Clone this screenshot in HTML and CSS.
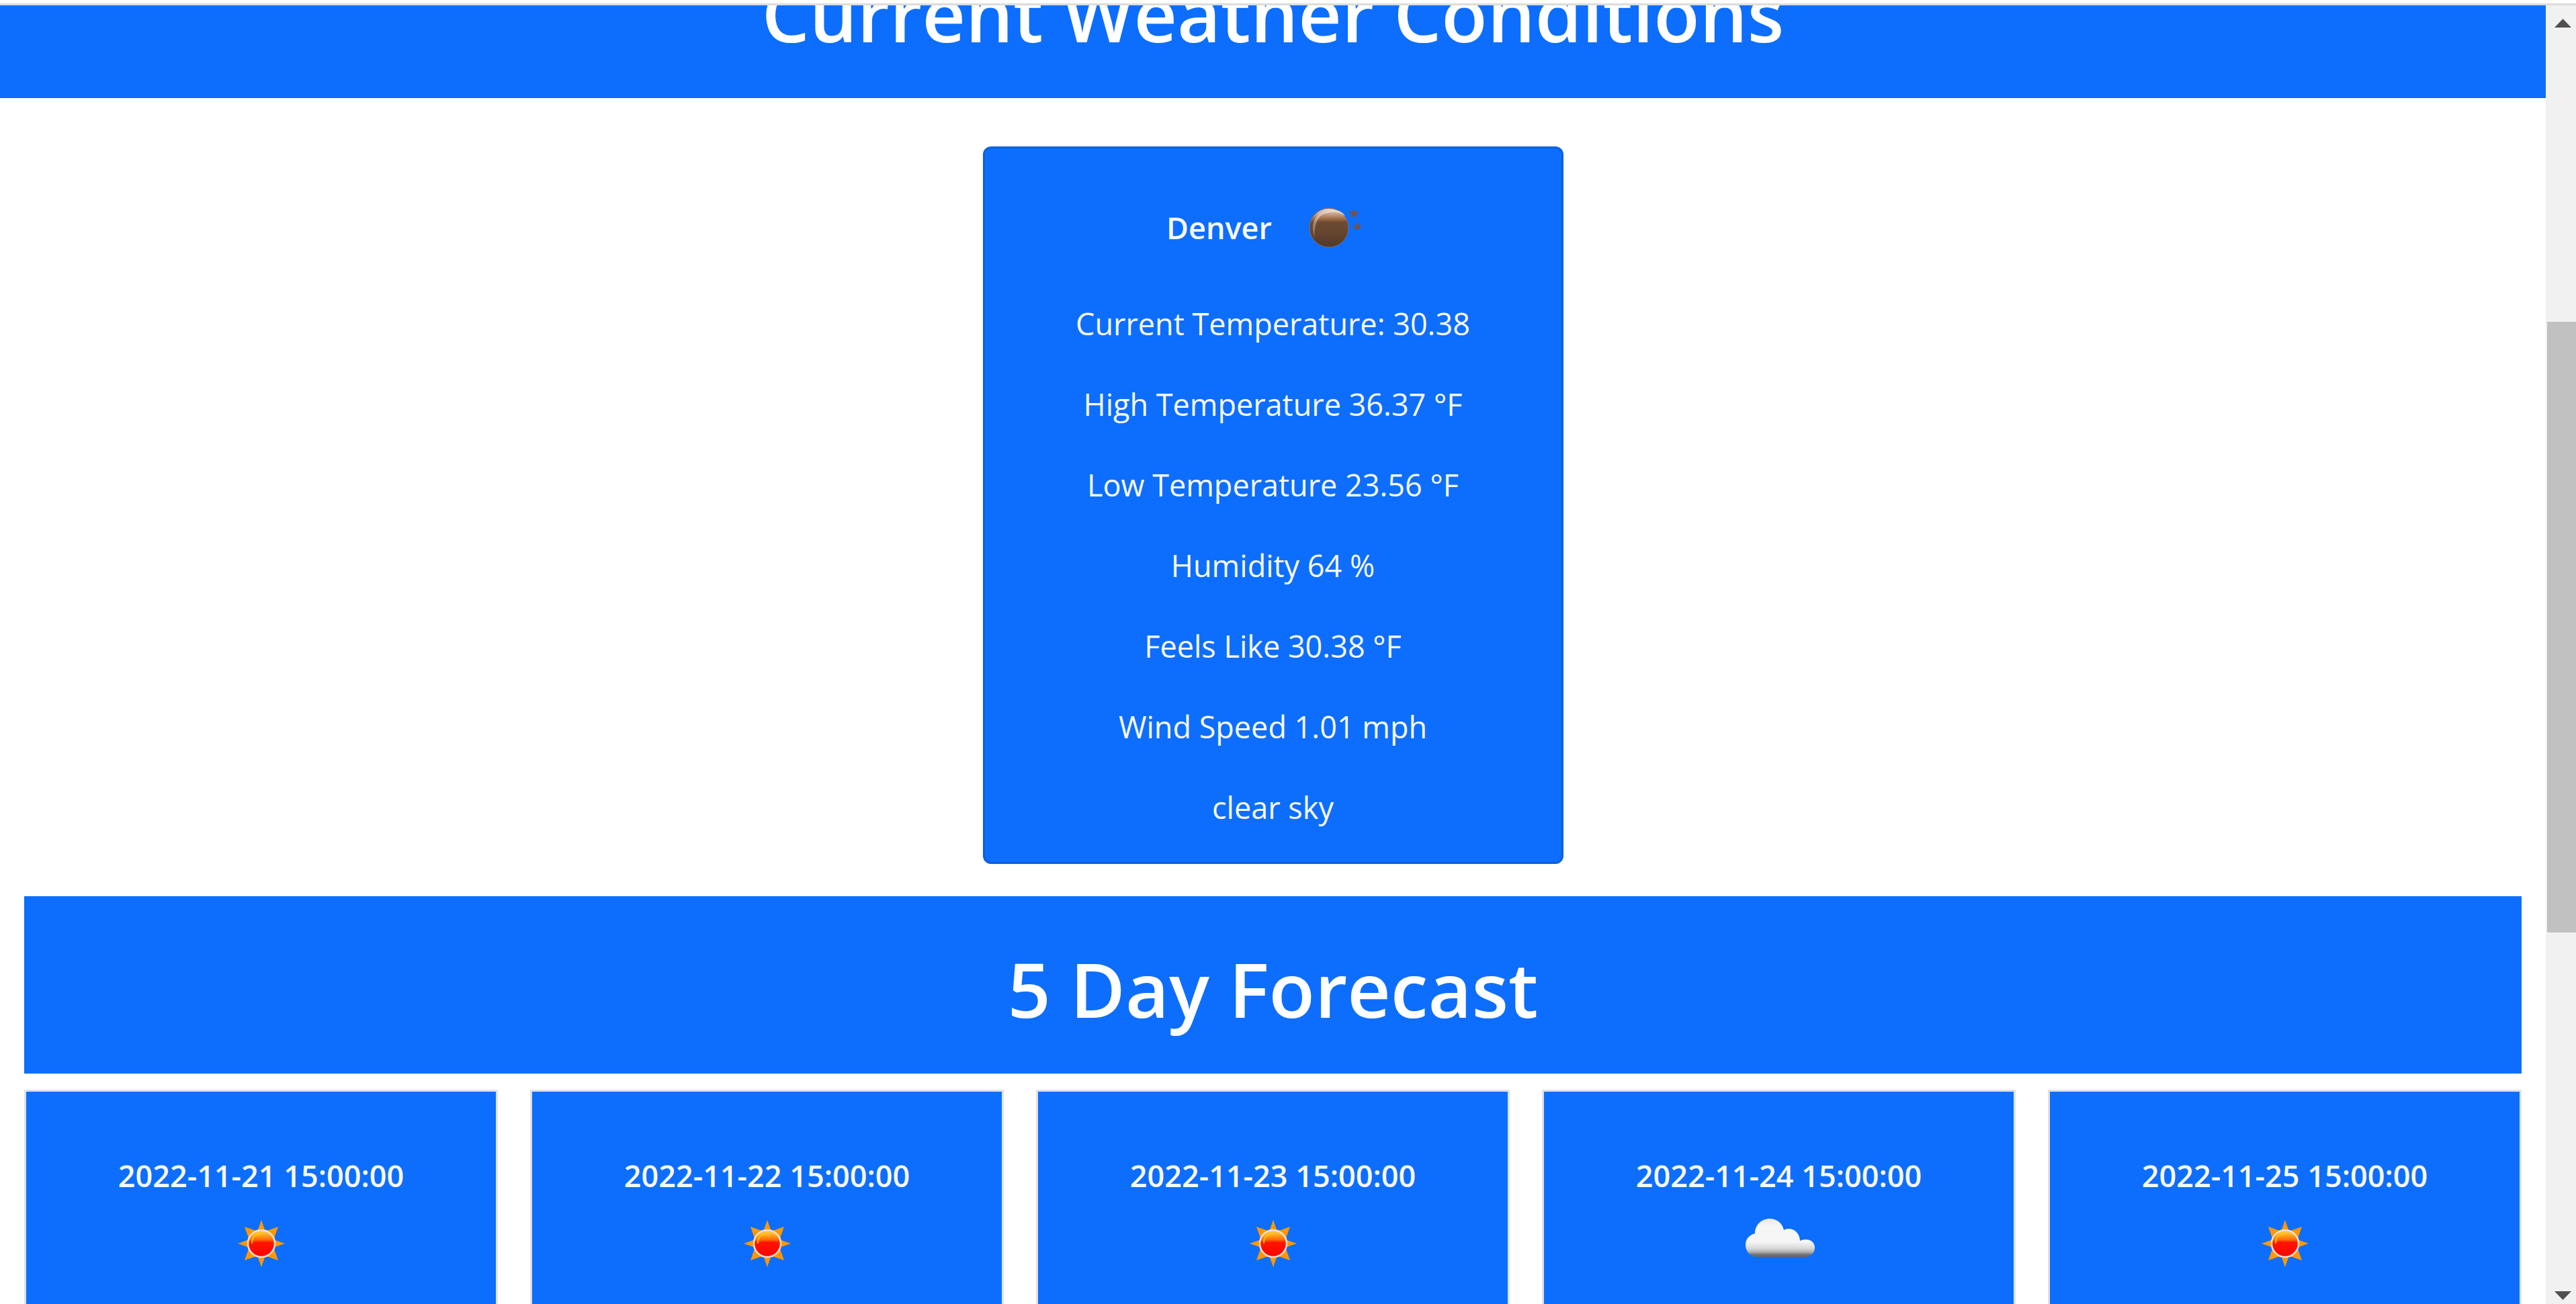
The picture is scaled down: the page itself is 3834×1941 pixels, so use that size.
FILE: index.html
```html
<!DOCTYPE html>
<html lang="en">
<head>
  <meta charset="utf-8">
  <title>Weather</title>
  <link rel="stylesheet" href="styles.css">
</head>
<body>
  <svg class="defs" aria-hidden="true">
    <defs>
      <linearGradient id="moon-fill" x1="0" y1="0" x2="0" y2="1">
        <stop offset="0" stop-color="#e8d8cf"/>
        <stop offset="0.14" stop-color="#c9a48c"/>
        <stop offset="0.27" stop-color="#a06c48"/>
        <stop offset="0.36" stop-color="#6c4a32"/>
        <stop offset="0.6" stop-color="#664630"/>
        <stop offset="1" stop-color="#503828"/>
      </linearGradient>
      <linearGradient id="moon-glow" x1="0" y1="1" x2="0.6" y2="0">
        <stop offset="0" stop-color="#e0c0a8" stop-opacity="0.3"/>
        <stop offset="1" stop-color="#f0e0d6" stop-opacity="0.7"/>
      </linearGradient>
      <linearGradient id="sun-fill" x1="0" y1="0" x2="0" y2="1">
        <stop offset="0" stop-color="#ffd860"/>
        <stop offset="0.18" stop-color="#ffa828"/>
        <stop offset="0.36" stop-color="#ff6a00"/>
        <stop offset="0.46" stop-color="#ff1400"/>
        <stop offset="1" stop-color="#ff0000"/>
      </linearGradient>
      <linearGradient id="cloud-fill" gradientUnits="userSpaceOnUse" x1="0" y1="38" x2="0" y2="95">
        <stop offset="0" stop-color="#e8e8e8"/>
        <stop offset="0.2" stop-color="#f6f6f6"/>
        <stop offset="0.6" stop-color="#f6f6f6"/>
        <stop offset="0.78" stop-color="#d8d8d8"/>
        <stop offset="0.88" stop-color="#a8a8a8"/>
        <stop offset="0.94" stop-color="#707070"/>
        <stop offset="1" stop-color="#686868"/>
      </linearGradient>
      <path id="star" d="M0-7 1.7-2.2 7-2.2 2.8.9 4.3 6 0 3-4.3 6-2.8.9-7-2.2-1.7-2.2Z"/>
      <path id="rays" d="M0-35 6-18H-6ZM0 35 6 18H-6ZM-35 0-18-6V6ZM35 0 18-6V6ZM-25-25-8-19-19-8ZM25-25 8-19 19-8ZM-25 25-8 19-19 8ZM25 25 8 19 19 8Z"/>
      <symbol id="icon-moon" viewBox="0 0 150 150">
        <circle cx="75" cy="75" r="29" fill="url(#moon-fill)" stroke="#8a6a58" stroke-width="1"/>
        <path d="M54 90C46 70 54 50 77 48 92 48 98 54 99 58 90 50 80 52 74 53 60 54 52 68 54 90Z" fill="url(#moon-glow)"/>
        <use href="#star" transform="translate(112 54) scale(1.1)" fill="#7a513c"/>
        <use href="#star" transform="translate(117 73)" fill="#7a513c"/>
      </symbol>
      <symbol id="icon-sun" viewBox="0 0 150 150">
        <use href="#rays" x="75" y="75" fill="#ff9800"/>
        <circle cx="75" cy="75" r="20" fill="url(#sun-fill)" stroke="#ffe0cc" stroke-width="2.5"/>
        <path d="M61 74C61 64 67 61 75 60" fill="none" stroke="#ffc800" stroke-opacity=".8" stroke-width="2.5" stroke-linecap="round"/>
      </symbol>
      <symbol id="icon-cloud" viewBox="0 0 150 150">
        <path d="M42 95C32 95 25 87 25 77 25 68 31 62 39 60 39 48 48 38 61 38 72 38 80 45 82 55 92 49 106 57 106 71 117 66 128 71 128 81 128 89 122 95 114 95Z" fill="url(#cloud-fill)"/>
      </symbol>
    </defs>
  </svg>

  <div class="topbar"></div>
  <div class="viewport">
    <main class="page">
      <header class="banner banner-top"><h1>Current Weather Conditions</h1></header>

      <div class="content">
        <section class="current">
          <div class="current-head">
            <h2>Denver</h2>
            <svg class="icon" role="img" aria-label="clear night"><use href="#icon-moon"/></svg>
          </div>
          <p>Current Temperature: 30.38</p>
          <p>High Temperature 36.37 °F</p>
          <p>Low Temperature 23.56 °F</p>
          <p>Humidity 64 %</p>
          <p>Feels Like 30.38 °F</p>
          <p>Wind Speed 1.01 mph</p>
          <p>clear sky</p>
        </section>

        <div class="banner"><h1>5 Day Forecast</h1></div>

        <section class="forecast">
          <article class="day"><h2>2022-11-21 15:00:00</h2><svg class="icon" role="img" aria-label="sunny"><use href="#icon-sun"/></svg></article>
          <article class="day"><h2>2022-11-22 15:00:00</h2><svg class="icon" role="img" aria-label="sunny"><use href="#icon-sun"/></svg></article>
          <article class="day"><h2>2022-11-23 15:00:00</h2><svg class="icon" role="img" aria-label="sunny"><use href="#icon-sun"/></svg></article>
          <article class="day"><h2>2022-11-24 15:00:00</h2><svg class="icon" role="img" aria-label="cloudy"><use href="#icon-cloud"/></svg></article>
          <article class="day"><h2>2022-11-25 15:00:00</h2><svg class="icon" role="img" aria-label="sunny"><use href="#icon-sun"/></svg></article>
        </section>
      </div>
    </main>

    <div class="scrollbar" aria-hidden="true">
      <svg class="arrow" viewBox="0 0 25 13"><path d="M12.5 0 25 13H0Z"/></svg>
      <div class="track"><div class="thumb"></div></div>
      <svg class="arrow" viewBox="0 0 25 13"><path d="M0 0H25L12.5 13Z"/></svg>
    </div>
  </div>
</body>
</html>
```

FILE: styles.css
```css
* {
  box-sizing: border-box;
}

body {
  margin: 0;
  height: 100vh;
  display: flex;
  flex-direction: column;
  overflow: hidden;
  background: #fff;
  color: #f8f9fa;
  font-family: "Segoe UI", "Open Sans", "Noto Sans", sans-serif;
  font-size: 45px;
  line-height: 72px;
}

h1,
h2,
p {
  margin: 0;
}

.defs {
  position: absolute;
  width: 0;
  height: 0;
}

.topbar {
  flex: none;
  height: 8px;
  border-bottom: 3px solid #dcdcdc;
}

.viewport {
  flex: 1;
  min-height: 0;
  display: flex;
}

.page {
  flex: 1;
  min-width: 0;
  overflow: hidden;
}

.banner {
  padding: 66px 48px 54px;
  background: #0d6efd;
  color: #fff;
  text-align: center;
}

/* the page is scrolled part of the way past its heading */
.banner-top {
  margin-top: -126px;
}

.banner h1 {
  font-size: 112px;
  font-weight: 600;
  line-height: 144px;
}

.content {
  display: flex;
  flex-direction: column;
  padding: 72px 36px 0;
}

.current {
  align-self: center;
  width: 864px;
  margin-bottom: 48px;
  padding: 43px 48px 45px;
  display: flex;
  flex-direction: column;
  gap: 48px;
  border: 3px solid #0b60df;
  border-radius: 12px;
  background: #0d6efd;
  text-align: center;
}

.current-head {
  display: flex;
  align-items: center;
  justify-content: center;
  gap: 10px;
  margin-bottom: -16px;
}

h2 {
  font-size: 45px;
  font-weight: 600;
  line-height: 52px;
}

.icon {
  display: block;
  width: 150px;
  height: 150px;
}

.forecast {
  display: grid;
  grid-template-columns: repeat(5, 1fr);
  gap: 48px;
  margin-top: 24px;
}

.day {
  display: flex;
  flex-direction: column;
  align-items: center;
  padding: 99px 48px;
  border: 3px solid #dee2e6;
  background: #0d6efd;
}

.scrollbar {
  flex: none;
  width: 45px;
  display: flex;
  flex-direction: column;
  align-items: center;
  padding: 20px 0 6px;
  background: #f1f1f1;
}

.arrow {
  flex: none;
  width: 25px;
  height: 13px;
  margin-left: 6px;
  fill: #505050;
}

.track {
  flex: 1;
  align-self: stretch;
  padding-top: 438px;
}

.thumb {
  height: 63%;
  margin-left: 2px;
  background: #c1c1c1;
}
```
